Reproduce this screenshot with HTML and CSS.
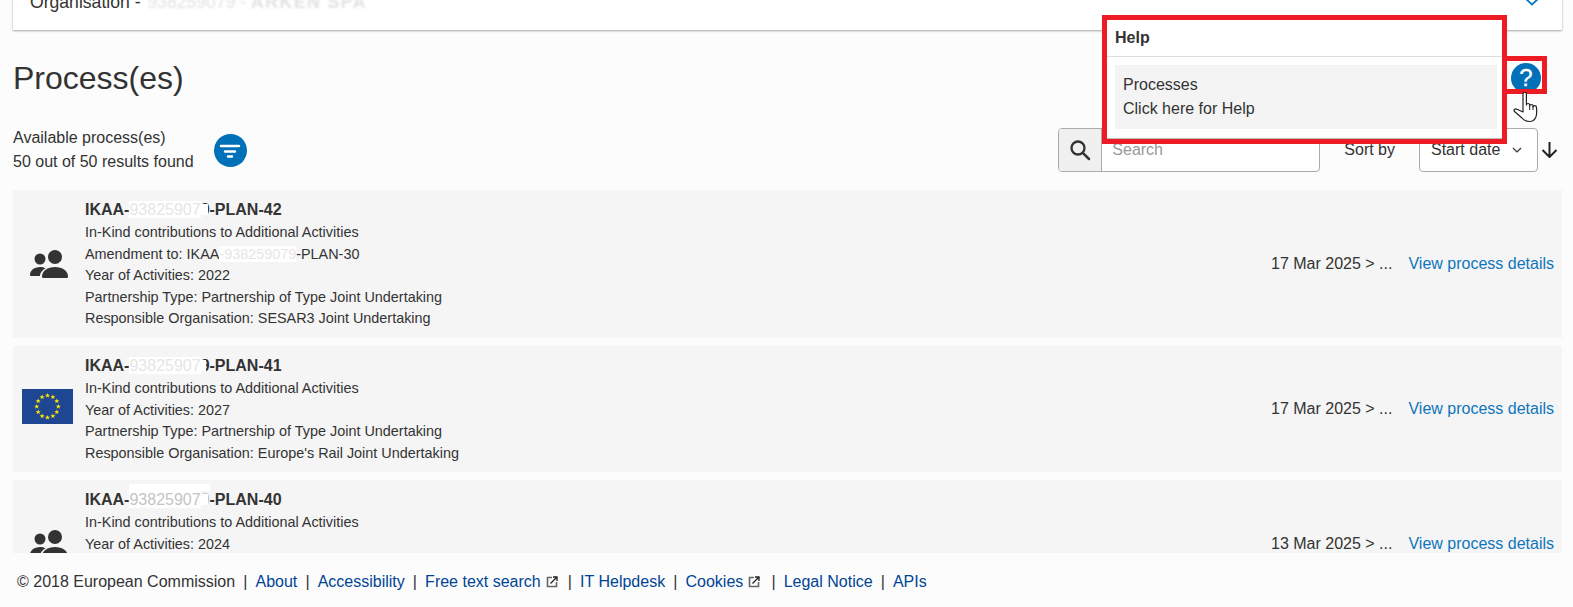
FILE: index.html
```html
<!DOCTYPE html>
<html lang="en">
<head>
<meta charset="utf-8">
<title>Process(es)</title>
<link rel="stylesheet" href="styles.css">
</head>
<body>
<svg class="defs" width="0" height="0" aria-hidden="true">
  <defs>
    <g id="users">
      <circle cx="25" cy="7" r="7"/>
      <path d="M13 28c-.8 0-1-.6-1-1.400 0-5.600 5.500-9.600 13-9.600s13 4 13 9.600c0 .8-.3 1.400-1 1.400z"/>
      <circle cx="10" cy="9" r="5.500"/>
      <path d="M1 26c-.7 0-1-.5-1-1.100 0-4.300 4.300-7.900 10-7.900 2 0 4 .5 5.500 1.300-3.200 1.700-5.300 4.400-5.600 7.700z"/>
    </g>
    <polygon id="star" points="0,-2.600 .7,-.8 2.500,-.8 1.100,.4 1.600,2.200 0,1.100 -1.600,2.200 -1.100,.4 -2.500,-.8 -.7,-.8"/>
    <g id="ext">
      <path d="M6 1.500H1.500v9h9V6" fill="none" stroke="#666" stroke-width="1.600"/>
      <path d="M4.500 7.500L10.500 1.500M7 1h4v4" fill="none" stroke="#222" stroke-width="1.300"/>
    </g>
  </defs>
</svg>

<div class="page">
  <section class="org-card">
    <span class="org-label">Organisation - <span class="org-redacted">938259079 - <b>ARKEN SPA</b></span></span>
    <svg class="org-chevron" width="16" height="9" viewBox="0 0 16 9"><path d="M1 1l7 6.500L15 1" fill="none" stroke="#0e76bc" stroke-width="1.800"/></svg>
  </section>

  <header class="heading">
    <h1>Process(es)</h1>
    <button class="help-btn" type="button">?</button>
  </header>

  <section class="toolbar">
    <div class="results">
      <div>Available process(es)</div>
      <div>50 out of 50 results found</div>
    </div>
    <button class="filter-btn" type="button" aria-label="Filter">
      <svg width="22" height="14" viewBox="0 0 22 14"><path d="M2 2h18M6 7.500h10M9 12.500h4" stroke="#fff" stroke-width="2.400" stroke-linecap="round" fill="none"/></svg>
    </button>
    <div class="controls">
      <div class="search">
        <span class="search-addon">
          <svg width="22" height="22" viewBox="0 0 22 22"><circle cx="9" cy="9" r="6.500" fill="none" stroke="#333" stroke-width="2.300"/><path d="M13.800 13.800L20 20" stroke="#333" stroke-width="2.500" stroke-linecap="round"/></svg>
        </span>
        <span class="search-input">Search</span>
      </div>
      <span class="sort-label">Sort by</span>
      <div class="select">
        <span>Start date</span>
        <svg width="10" height="6" viewBox="0 0 10 6"><path d="M1 1l4 4 4-4" fill="none" stroke="#333" stroke-width="1.200"/></svg>
      </div>
      <svg class="sort-dir" width="17" height="16" viewBox="0 0 17 16"><path d="M8.500 0v14.500M1.500 8l7 7 7-7" fill="none" stroke="#222" stroke-width="2"/></svg>
    </div>
  </section>

  <section class="rows">
    <article class="row">
      <div class="row-icon"><svg class="users" width="38" height="28" viewBox="0 0 38 28"><use href="#users"/></svg></div>
      <div class="row-main">
        <div class="row-title">IKAA-<span class="redact">93825907</span><span class="tail tail-wide">9</span>-PLAN-42</div>
        <div>In-Kind contributions to Additional Activities</div>
        <div>Amendment to: IKAA<span class="redact">-938259079</span>-PLAN-30</div>
        <div>Year of Activities: 2022</div>
        <div>Partnership Type: Partnership of Type Joint Undertaking</div>
        <div>Responsible Organisation: SESAR3 Joint Undertaking</div>
      </div>
      <div class="row-side"><span class="row-date">17 Mar 2025 &gt; ...</span><a class="row-link" href="#">View process details</a></div>
    </article>

    <article class="row">
      <div class="row-icon">
        <svg class="flag" width="51" height="35" viewBox="0 0 52 35" preserveAspectRatio="none">
          <rect width="52" height="35" fill="#1f4693"/>
          <g fill="#ffe600">
            <use href="#star" x="26" y="6.500"/><use href="#star" x="31.500" y="8"/><use href="#star" x="35.500" y="12"/>
            <use href="#star" x="37" y="17.500"/><use href="#star" x="35.500" y="23"/><use href="#star" x="31.500" y="27"/>
            <use href="#star" x="26" y="28.500"/><use href="#star" x="20.500" y="27"/><use href="#star" x="16.500" y="23"/>
            <use href="#star" x="15" y="17.500"/><use href="#star" x="16.500" y="12"/><use href="#star" x="20.500" y="8"/>
          </g>
        </svg>
      </div>
      <div class="row-main">
        <div class="row-title">IKAA-<span class="redact">93825907</span><span class="tail">9</span>-PLAN-41</div>
        <div>In-Kind contributions to Additional Activities</div>
        <div>Year of Activities: 2027</div>
        <div>Partnership Type: Partnership of Type Joint Undertaking</div>
        <div>Responsible Organisation: Europe's Rail Joint Undertaking</div>
      </div>
      <div class="row-side"><span class="row-date">17 Mar 2025 &gt; ...</span><a class="row-link" href="#">View process details</a></div>
    </article>

    <article class="row row-clipped">
      <div class="row-icon"><svg class="users" width="38" height="28" viewBox="0 0 38 28"><use href="#users"/></svg></div>
      <div class="row-main">
        <div class="row-title">IKAA-<span class="redact redact-tall">93825907</span><span class="tail tail-wide redact-tall">9</span>-PLAN-40</div>
        <div>In-Kind contributions to Additional Activities</div>
        <div>Year of Activities: 2024</div>
      </div>
      <div class="row-side"><span class="row-date">13 Mar 2025 &gt; ...</span><a class="row-link" href="#">View process details</a></div>
    </article>
  </section>
</div>

<aside class="popover">
  <div class="popover-head">Help</div>
  <div class="popover-body">
    <div>Processes</div>
    <div>Click here for Help</div>
  </div>
</aside>
<div class="help-mark"></div>
<svg class="hand" width="27" height="31" viewBox="0 0 27 31">
  <path d="M10 20V2c0-2.400 3.400-2.400 3.400 0v11c0-2 3.300-2 3.300 0v1c0-2 3.300-2 3.300 0v1c0-1.800 3.400-1.800 3.400 0 .5 5 .8 7.500-.7 10.500-1 2-2.500 4-6 4-3.400 0-5.700-1-7.700-3.500L1.500 19.500c-1.200-1.600.8-3.500 2.500-2.300z" fill="#fff" stroke="#222" stroke-width="1.200" stroke-linejoin="round"/>
  <path d="M16.700 13v5M20 14v4" fill="none" stroke="#222" stroke-width="1"/>
</svg>

<footer class="footer">
  <span>© 2018 European Commission</span>
  <span class="sep">|</span>
  <a href="#">About</a>
  <span class="sep">|</span>
  <a href="#">Accessibility</a>
  <span class="sep">|</span>
  <a href="#" class="ext-link ext-link-tight">Free text search <svg width="12" height="12" viewBox="0 0 12 12"><use href="#ext"/></svg></a>
  <span class="sep">|</span>
  <a href="#">IT Helpdesk</a>
  <span class="sep">|</span>
  <a href="#" class="ext-link">Cookies <svg width="12" height="12" viewBox="0 0 12 12"><use href="#ext"/></svg></a>
  <span class="sep">|</span>
  <a href="#">Legal Notice</a>
  <span class="sep">|</span>
  <a href="#">APIs</a>
</footer>
</body>
</html>
```

FILE: styles.css
```css
* { box-sizing: border-box; }

html, body {
  margin: 0;
  height: 100%;
  overflow: hidden;
}

body {
  background: #fcfcfc;
  color: #333;
  font-family: "Liberation Sans", Arial, sans-serif;
  font-size: 16px;
  line-height: 24px;
}

.defs { position: absolute; }

.page { padding: 0 11px 0 13px; }

.org-card {
  display: flex;
  justify-content: space-between;
  margin-top: -20px;
  height: 50px;
  padding: 10px 22px 0 17px;
  background: #fff;
  box-shadow: 0 1px 2px rgba(0, 0, 0, .35);
  font-size: 17.6px;
}

.org-redacted {
  color: #e2e2e2;
  filter: blur(.8px);
  margin-left: 2px;
}

.org-redacted b { letter-spacing: 1.500px; }

.org-chevron { margin-top: 7px; }

.heading {
  display: flex;
  justify-content: space-between;
  align-items: flex-start;
  margin-top: 24px;
  height: 48px;
}

h1 {
  margin: 0;
  font-size: 32px;
  font-weight: 400;
  line-height: 48px;
}

.help-btn {
  width: 30px;
  height: 30px;
  margin: 9px 21px 0 0;
  padding: 0;
  border: 0;
  border-radius: 50%;
  background: #0071b8;
  color: #fff;
  font: 400 24px/30px "Liberation Sans", Arial, sans-serif;
  -webkit-text-stroke: .3px #fff;
}

.toolbar {
  display: flex;
  align-items: flex-start;
  margin-top: 24px;
  height: 48px;
}

.filter-btn {
  display: flex;
  align-items: center;
  justify-content: center;
  width: 33px;
  height: 33px;
  margin: 8px 0 0 20px;
  padding: 0;
  border: 0;
  border-radius: 50%;
  background: #0071b8;
}

.controls {
  display: flex;
  align-items: center;
  margin: 2px 4px 0 auto;
  height: 44px;
}

.search {
  display: flex;
  width: 262px;
  height: 44px;
  border: 1px solid #aaa;
  border-radius: 4px;
  background: #fff;
}

.search-addon {
  display: flex;
  align-items: center;
  justify-content: center;
  width: 43px;
  background: #f0f0f0;
  border-right: 1px solid #aaa;
  border-radius: 3px 0 0 3px;
}

.search-input {
  padding: 9px 0 0 10px;
  color: #999;
}

.sort-label { margin-left: 24px; }

.select {
  display: flex;
  align-items: center;
  justify-content: space-between;
  width: 119px;
  height: 44px;
  margin-left: 24px;
  padding: 0 15px 0 11px;
  border: 1px solid #aaa;
  border-radius: 4px;
  background: #fff;
}

.sort-dir { margin-left: 3px; }

.rows {
  display: flex;
  flex-direction: column;
  gap: 8px;
  margin-top: 16px;
}

.row {
  display: flex;
  align-items: center;
  padding: 8px 8px 8px 0;
  background: #f5f5f5;
  font-size: 14.4px;
  line-height: 21.6px;
}

.row-clipped { min-height: 128px; }

.row-icon {
  display: flex;
  justify-content: center;
  width: 72px;
  flex: none;
}

.users { fill: #333; display: block; }

.flag {
  display: block;
  margin: -6px 0 0 -4px;
}

.row-main {
  flex: 1;
  align-self: flex-start;
}

.row-title {
  font-size: 16px;
  font-weight: 700;
  line-height: 24px;
}

.redact {
  background: #fff;
  color: #e6e6e6;
  font-weight: 400;
}

.redact-tall {
  color: #c4c4c4;
  box-shadow: 0 -7px 0 #fff;
}

.tail { position: relative; }

.tail::before {
  content: "";
  position: absolute;
  left: 0;
  top: 3px;
  bottom: 3px;
  width: 55%;
  background: #fff;
}

.tail-wide::before { width: 85%; }

.row-side {
  display: flex;
  gap: 16px;
  font-size: 16px;
  line-height: 24px;
}

.row-link { color: #0e76bc; text-decoration: none; }

.popover {
  position: absolute;
  left: 1102px;
  top: 15px;
  width: 405px;
  height: 129px;
  border: 5px solid #ed1c24;
  background: #fff;
  box-shadow: inset 0 -1px 0 #bbb;
}

.popover-head {
  height: 37px;
  padding: 6px 8px 0;
  border-bottom: 1px solid #ddd;
  font-weight: 700;
}

.popover-body {
  margin: 8px 5px 0 8px;
  padding: 8px;
  background: #f4f4f4;
}

.help-mark {
  position: absolute;
  left: 1507px;
  top: 56px;
  width: 40px;
  height: 38px;
  border: 5px solid #ed1c24;
  border-left: 0;
}

.hand {
  position: absolute;
  left: 1513px;
  top: 92px;
}

.footer {
  position: absolute;
  left: 0;
  right: 0;
  bottom: 0;
  display: flex;
  align-items: center;
  gap: 8.1px;
  height: 54px;
  padding: 3px 0 0 17px;
  background: #fcfcfc;
  color: #333;
}

.footer a { color: #004494; text-decoration: none; }

.ext-link {
  display: flex;
  align-items: center;
  gap: 5px;
  white-space: nowrap;
}

.ext-link svg {
  flex: none;
  margin-right: 3px;
}

.ext-link-tight svg { margin-right: 2px; }
```
